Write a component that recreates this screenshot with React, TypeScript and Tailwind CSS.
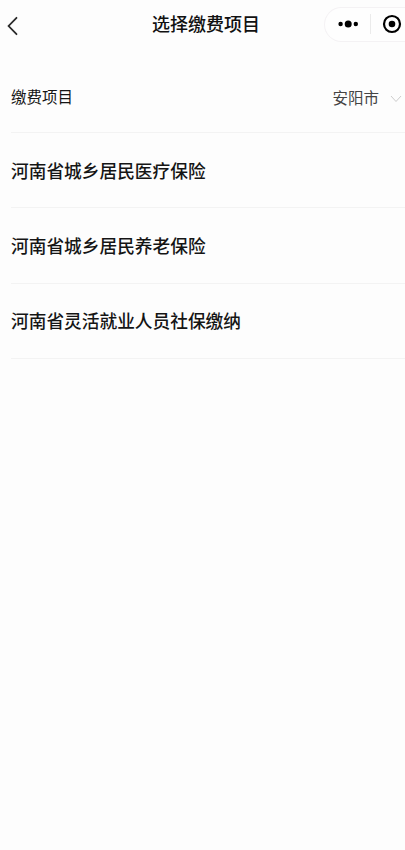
const items = ['河南省城乡居民医疗保险', '河南省城乡居民养老保险', '河南省灵活就业人员社保缴纳']

function NavBar() {
  return (
    <header className="grid h-12 grid-cols-[152px_1fr_81px] items-center">
      <button aria-label="返回" className="pl-[7px]">
        <svg
          width="11"
          height="20"
          viewBox="0 0 11 20"
          className="mt-1"
          fill="none"
          stroke="#2a2a2a"
          strokeWidth="1.8"
          strokeLinecap="round"
        >
          <path d="M9.5 1.8 1.6 10l7.9 8.2" />
        </svg>
      </button>
      <h1 className="whitespace-nowrap pb-0.5 text-[18px] font-medium leading-6 text-[#111]">选择缴费项目</h1>
      {/* Capsule menu, runs off the right edge */}
      <div className="flex h-[35px] items-center rounded-l-full border border-r-0 border-[#f4f2f4] bg-[#fefefe]">
        <button aria-label="更多" className="flex h-5 w-[46px] items-center justify-center border-r border-[#ebebeb]">
          <svg width="20" height="8" viewBox="0 0 20 8" fill="#000">
            <circle cx="2.6" cy="4" r="2.2" />
            <circle cx="10.2" cy="4" r="3.5" />
            <circle cx="17.8" cy="4" r="2.2" />
          </svg>
        </button>
        <button aria-label="关闭" className="ml-[11px]">
          <svg width="20" height="20" viewBox="0 0 20 20">
            <circle cx="10" cy="10" r="8" fill="none" stroke="#000" strokeWidth="2.2" />
            <circle cx="10" cy="10" r="3.3" fill="#000" />
          </svg>
        </button>
      </div>
    </header>
  )
}

export default function App() {
  return (
    <div className="min-h-[850px] overflow-hidden bg-[#fdfdfd] font-['Noto_Sans_CJK_SC',sans-serif] text-[#151515]">
      <NavBar />
      <main className="ml-[11px] pt-4">
        <div className="flex h-[69px] items-center justify-between border-b border-[#f3f3f3] text-[15.5px]">
          <span className="pb-0.5">缴费项目</span>
          <button className="flex items-center gap-[11px] pr-[3px] text-[#444]">
            安阳市
            <svg width="12" height="8" viewBox="0 0 12 8" className="mt-0.5" fill="none" stroke="#ccc">
              <path d="m1 1 5 5.5L11 1" />
            </svg>
          </button>
        </div>
        <ul>
          {items.map(item => (
            <li
              key={item}
              className="flex h-[75.3px] items-center border-b border-[#f3f3f3] text-[17.7px] font-medium"
            >
              {item}
            </li>
          ))}
        </ul>
      </main>
    </div>
  )
}
